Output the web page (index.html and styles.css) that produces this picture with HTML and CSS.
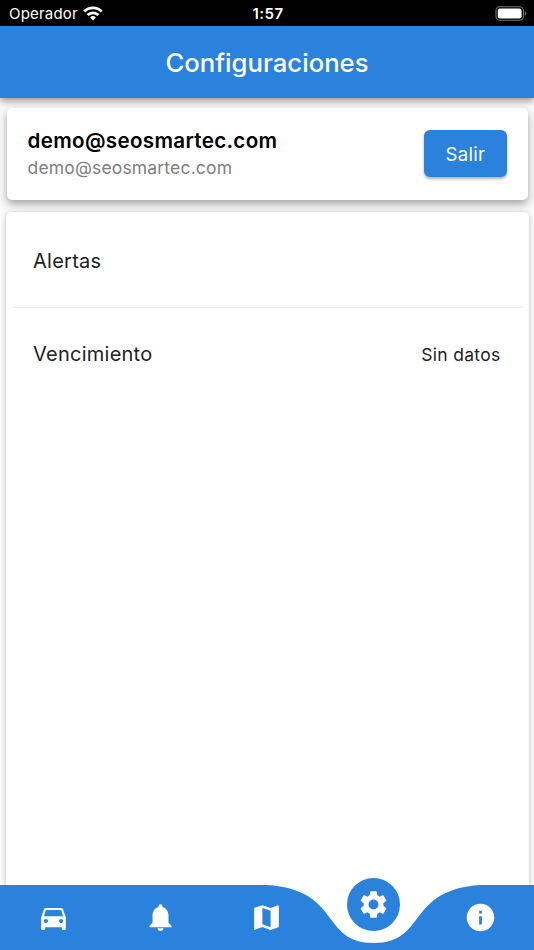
FILE: index.html
```html
<!DOCTYPE html>
<html lang="es">
<head>
    <meta charset="UTF-8">
    <meta name="viewport" content="width=device-width, initial-scale=1.0">
    <title>Configuraciones</title>
    <link rel="stylesheet" href="styles.css">
</head>
<body>
    <div class="status-bar">
        <div class="carrier">
            <span>Operador</span>
            <svg class="wifi" viewBox="0 0 20 15" width="20" height="15">
                <g fill="none" stroke="#fff" stroke-width="2.8">
                    <path d="M1.3 5.4a12.4 12.4 0 0 1 17.4 0"/>
                    <path d="M4.6 9a7.8 7.8 0 0 1 10.8 0"/>
                </g>
                <path fill="#fff" d="M10 14.4l-2.9-2.9a4.2 4.2 0 0 1 5.8 0z"/>
            </svg>
        </div>
        <span class="time">1:57</span>
        <svg class="battery" viewBox="0 0 32 15" width="32" height="15">
            <rect x="1" y=".8" width="27.4" height="13.4" rx="3.8" fill="none" stroke="#777" stroke-width="1.1"/>
            <rect x="2.8" y="2.6" width="23.8" height="9.8" rx="2.2" fill="#fff"/>
            <path fill="#777" d="M29.8 5.2a2.5 2.5 0 0 1 0 4.6z"/>
        </svg>
    </div>

    <header class="header">
        <h1>Configuraciones</h1>
    </header>

    <main class="content">
        <!-- User -->
        <section class="card user-card">
            <div>
                <div class="user-name">demo@seosmartec.com</div>
                <div class="user-email">demo@seosmartec.com</div>
            </div>
            <button class="logout">Salir</button>
        </section>

        <!-- Settings -->
        <section class="card settings">
            <div class="row">
                <span>Alertas</span>
            </div>
            <div class="row">
                <span>Vencimiento</span>
                <span class="value">Sin datos</span>
            </div>
        </section>
    </main>

    <nav class="navbar">
        <svg class="nav-shape" viewBox="0 0 534 65" width="534" height="65">
            <path fill="#2a82dc" d="M0 0H267C341.8 4.8 320.4 58 373.8 58C427.2 58 405.8 4.8 480.6 0H534V65H0z"/>
        </svg>
        <a class="nav-item"><svg viewBox="0 0 24 24"><path d="M18.92 6.01C18.72 5.42 18.16 5 17.5 5h-11c-.66 0-1.21.42-1.42 1.01L3 12v8c0 .55.45 1 1 1h1c.55 0 1-.45 1-1v-1h12v1c0 .55.45 1 1 1h1c.55 0 1-.45 1-1v-8l-2.08-5.99zM6.5 16c-.83 0-1.5-.67-1.5-1.5S5.67 13 6.5 13s1.5.67 1.5 1.5S7.33 16 6.5 16zm11 0c-.83 0-1.5-.67-1.5-1.5s.67-1.5 1.5-1.5 1.5.67 1.5 1.5-.67 1.5-1.5 1.5zM5 11l1.5-4.5h11L19 11H5z"/></svg></a>
        <a class="nav-item"><svg viewBox="0 0 24 24"><path d="M12 2.3c-.85 0-1.4.6-1.4 1.5v.5C7.9 5 6.2 7.3 6.2 10.5v5.3L4 18v1h16v-1l-2.2-2.2v-5.3c0-3.2-1.7-5.5-4.4-6.2v-.5c0-.9-.55-1.5-1.4-1.5zM9.9 19.8h4.2c0 1.1-.9 2-2.1 2s-2.1-.9-2.1-2z"/></svg></a>
        <a class="nav-item"><svg viewBox="0 0 24 24"><path d="M20.5 3l-.16.03L15 5.1 9 3 3.36 4.9c-.21.07-.36.25-.36.48V20.5c0 .28.22.5.5.5l.16-.03L9 18.9l6 2.1 5.64-1.9c.21-.07.36-.25.36-.48V3.5c0-.28-.22-.5-.5-.5zM15 19l-6-2.11V5l6 2.11V19z"/></svg></a>
        <a class="nav-item active"><span class="bubble"><svg viewBox="0 0 24 24"><path d="M19.14 12.94c.04-.3.06-.61.06-.94 0-.32-.02-.64-.07-.94l2.03-1.58c.18-.14.23-.41.12-.61l-1.92-3.32c-.12-.22-.37-.29-.59-.22l-2.39.96c-.5-.38-1.03-.7-1.62-.94l-.36-2.54c-.04-.24-.24-.41-.48-.41h-3.84c-.24 0-.43.17-.47.41l-.36 2.54c-.59.24-1.13.57-1.62.94l-2.39-.96c-.22-.08-.47 0-.59.22L2.74 8.87c-.12.21-.08.47.12.61l2.03 1.58c-.05.3-.09.63-.09.94s.02.64.07.94l-2.03 1.58c-.18.14-.23.41-.12.61l1.92 3.32c.12.22.37.29.59.22l2.39-.96c.5.38 1.03.7 1.62.94l.36 2.54c.05.24.24.41.48.41h3.84c.24 0 .44-.17.47-.41l.36-2.54c.59-.24 1.13-.56 1.62-.94l2.39.96c.22.08.47 0 .59-.22l1.92-3.32c.12-.22.07-.47-.12-.61l-2.01-1.58zM12 15.6c-1.98 0-3.6-1.62-3.6-3.6s1.62-3.6 3.6-3.6 3.6 1.62 3.6 3.6-1.62 3.6-3.6 3.6z"/></svg></span></a>
        <a class="nav-item"><svg viewBox="0 0 24 24"><path d="M12 2C6.48 2 2 6.48 2 12s4.48 10 10 10 10-4.48 10-10S17.52 2 12 2zm1 15h-2v-6h2v6zm0-8h-2V7h2v2z"/></svg></a>
    </nav>
</body>
</html>
```

FILE: styles.css
```css
* {
    box-sizing: border-box;
}
body {
    margin: 0;
    height: 950px;
    display: flex;
    flex-direction: column;
    overflow: hidden;
    background-color: #fafafa;
    font-family: Inter, sans-serif;
    color: #222;
}
.status-bar {
    height: 26px;
    padding: 1px 7px 0 9px;
    display: grid;
    grid-template-columns: 1fr auto 1fr;
    align-items: center;
    background-color: #000;
    color: #fff;
    font-size: 15px;
}
.carrier {
    display: flex;
    align-items: center;
    gap: 5px;
    letter-spacing: 0.2px;
}
.time {
    font-weight: 600;
    letter-spacing: 0.5px;
}
.battery {
    justify-self: end;
}
.header {
    height: 72px;
    display: flex;
    justify-content: center;
    align-items: center;
    background-color: #2a82dc;
    color: #fff;
    box-shadow: 0 3px 7px rgba(0, 0, 0, 0.4);
    z-index: 1;
}
h1 {
    margin: 0;
    font-size: 25.7px;
    font-weight: 500;
}
.content {
    flex-grow: 1;
    display: flex;
    flex-direction: column;
    gap: 12px;
    padding: 9.5px 5.5px 0;
}
.card {
    background-color: #fff;
    border-radius: 5px;
}
.user-card {
    height: 92.5px;
    margin: 0 1px;
    padding: 0 20.5px 0 21px;
    display: flex;
    justify-content: space-between;
    align-items: center;
    box-shadow: 0 4px 8px rgba(0, 0, 0, 0.35);
}
.user-name {
    font-size: 20.6px;
    line-height: 27px;
    font-weight: 600;
    letter-spacing: 0.32px;
    color: #000;
}
.user-email {
    font-size: 17.5px;
    line-height: 27px;
    letter-spacing: 0.17px;
    color: #808080;
}
.logout {
    width: 83px;
    height: 47px;
    padding: 0;
    border: none;
    border-radius: 6px;
    background-color: #2a82dc;
    color: #fff;
    font-family: inherit;
    font-size: 18.6px;
    letter-spacing: 0.3px;
    box-shadow: 0 2px 3px rgba(0, 0, 0, 0.3);
}
.settings {
    flex-grow: 1;
    padding: 2.5px 6px 0;
    border-radius: 5px 5px 0 0;
    box-shadow: 0 1px 5px rgba(0, 0, 0, 0.25);
}
.row {
    height: 93px;
    padding: 0 22px 0 21.5px;
    display: flex;
    justify-content: space-between;
    align-items: center;
    font-size: 20px;
    letter-spacing: 0.25px;
}
.row:first-child {
    border-bottom: 1px solid #ececec;
}
.value {
    font-size: 17.5px;
    letter-spacing: 0.3px;
}
.navbar {
    position: relative;
    height: 65px;
    display: grid;
    grid-template-columns: repeat(5, 1fr);
    align-items: center;
    background-color: #fff;
}
.nav-shape {
    position: absolute;
    top: 0;
    left: 0;
}
.nav-item {
    position: relative;
    display: flex;
    justify-content: center;
}
.nav-item svg {
    width: 33px;
    height: 33px;
    fill: #fff;
}
.active {
    align-self: start;
    margin-top: -7.5px;
}
.bubble {
    width: 53px;
    height: 53px;
    display: flex;
    justify-content: center;
    align-items: center;
    border-radius: 50%;
    background-color: #2a82dc;
}
```
